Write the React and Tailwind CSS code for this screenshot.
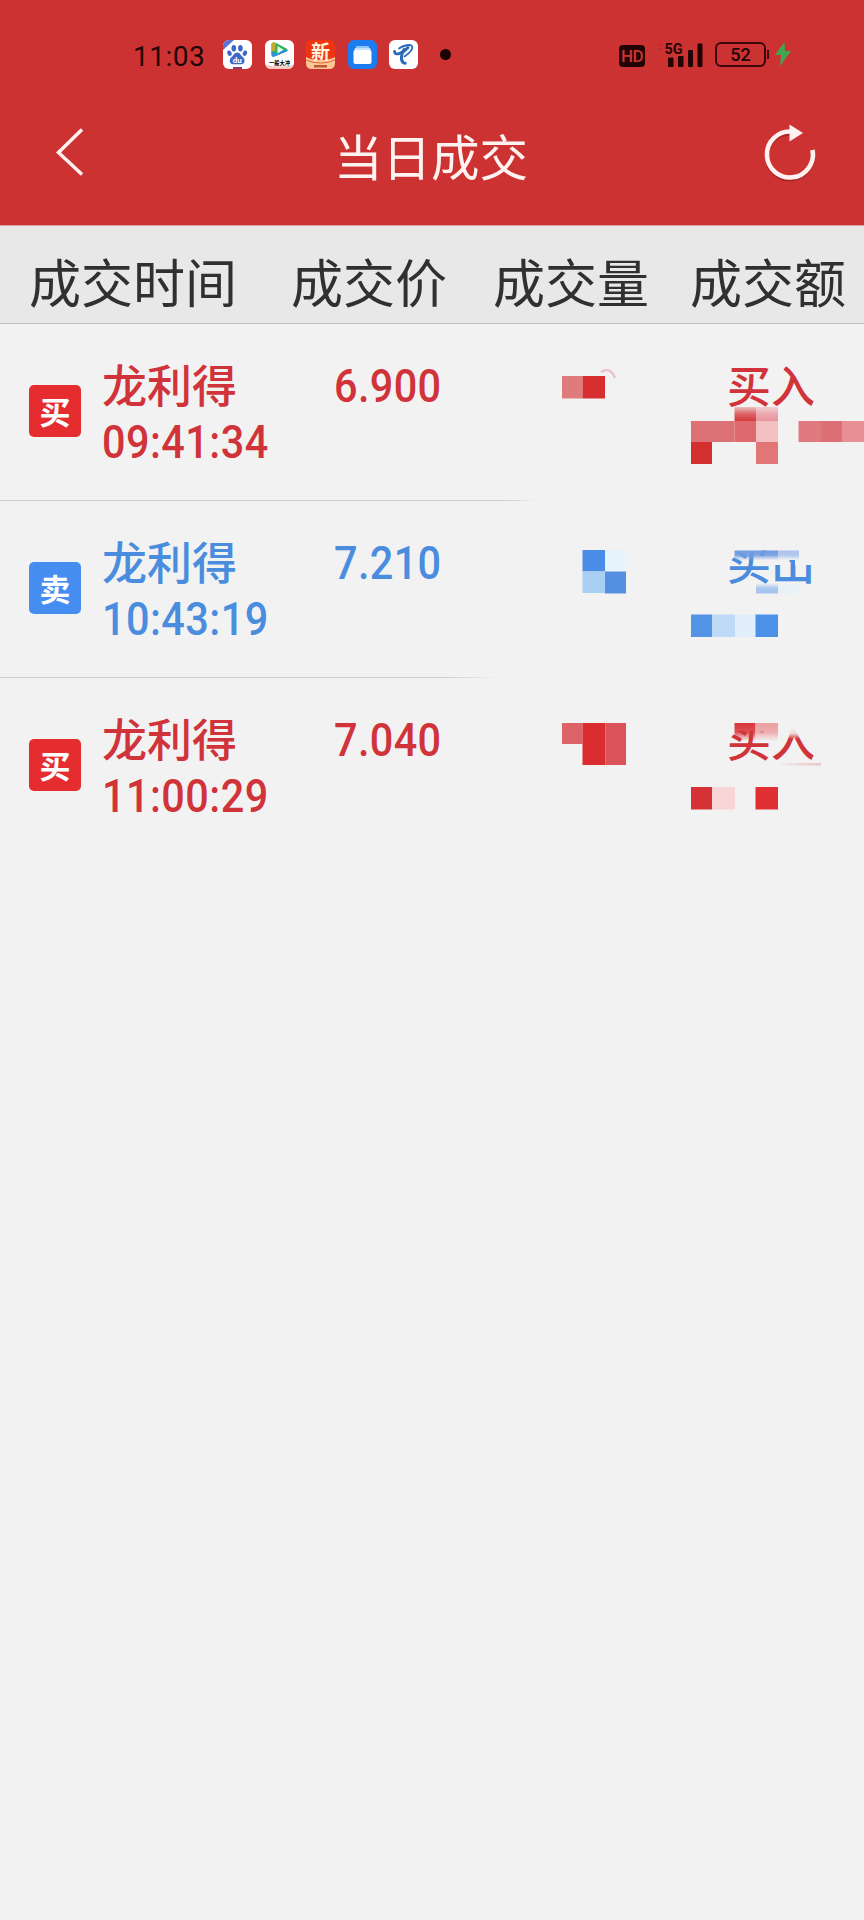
import React from 'react';

const trades = [
  { type: 'buy', badge: '买', name: '龙利得', time: '09:41:34', price: '6.900', side: '买入' },
  { type: 'sell', badge: '卖', name: '龙利得', time: '10:43:19', price: '7.210', side: '买出' },
  { type: 'buy', badge: '买', name: '龙利得', time: '11:00:29', price: '7.040', side: '买入' },
];

// [x, y, width, height, fill] of each mosaic block, per row
const mosaics = [
  [
    [62, 52, 20.5, 22.5, '#df7b7d'],
    [82.5, 52, 22.5, 22.5, '#d72e30'],
    [234.5, 83, 21.5, 14, 'url(#redDown)'],
    [256, 83, 22, 14, 'url(#pinkDown)'],
    [191, 97, 43.5, 21, '#dd7276'],
    [234.5, 97, 21.5, 21, '#df6a6e'],
    [256, 97, 22, 21, '#f4bfc1'],
    [298.5, 97, 22.5, 21, '#df7a80'],
    [321, 97, 21, 21, '#dc7074'],
    [342, 97, 22, 21, '#e88f96'],
    [191, 118, 21, 22, '#d3302f'],
    [256, 118, 22, 22, '#e27677'],
  ],
  [
    [226, 38, 52, 11.5, '#f2f2f2'],
    [275, 38, 47, 21, '#f2f2f2'],
    [275, 58, 14.5, 6, '#f2f2f2'],
    [295, 58, 27, 6, '#f2f2f2'],
    [82.5, 49, 22.5, 21.5, '#4b8de6'],
    [105, 49, 20, 21, '#e6f3fd'],
    [82.5, 70.5, 22.5, 21.5, '#a9cff3'],
    [105, 70.5, 21, 22, '#5590e0'],
    [234.5, 49.5, 43.5, 10, 'url(#blueUp)'],
    [278, 49.5, 21, 10, 'url(#lightBlueUp)'],
    [256, 82, 22, 10.5, 'url(#blueDown)'],
    [278, 84, 21, 8.5, '#e8f1f6'],
    [191, 113.5, 21, 22.5, '#5494e6'],
    [212, 113.5, 23, 22.5, '#bfdaf6'],
    [235, 113.5, 20.5, 22.5, '#e2eefc'],
    [255.5, 113.5, 22.5, 22.5, '#4b91e8'],
  ],
  [
    [226, 38, 52, 15, '#f2f2f2'],
    [273, 38, 49, 12, '#f2f2f2'],
    [278, 50, 44, 11, 'url(#coverFade)'],
    [62, 45, 20.5, 21, '#dc6468'],
    [82.5, 45, 23, 42, '#db2c2f'],
    [105.5, 45, 20.5, 42, '#db5358'],
    [234.5, 45, 21, 18, 'url(#redUp)'],
    [255.5, 45, 22.5, 18, 'url(#pinkUp)'],
    [278, 85, 43, 2.5, 'url(#lineFade)'],
    [191, 109, 21, 22.5, '#d43237'],
    [212, 109, 23, 22.5, '#fad5d7'],
    [255.5, 109, 22.5, 22.5, '#e03033'],
  ],
];

const Fade = ({ id, from, to, horizontal }) => (
  <linearGradient id={id} x1="0" y1="0" x2={horizontal ? 1 : 0} y2={horizontal ? 0 : 1}>
    <stop offset="0" stopColor={from[0]} stopOpacity={from[1]} />
    <stop offset="0.5" stopColor={from[0]} stopOpacity={Math.max(from[1], to[1]) * 0.85} />
    <stop offset="1" stopColor={to[0]} stopOpacity={to[1]} />
  </linearGradient>
);

const Gradients = () => (
  <svg className="absolute h-0 w-0">
    <defs>
      <Fade id="redDown" from={['#d9494d', 0.3]} to={['#d3393e', 1]} />
      <Fade id="pinkDown" from={['#ec9aa2', 0.4]} to={['#ea949c', 1]} />
      <Fade id="redUp" from={['#d8343a', 1]} to={['#d8343a', 0]} />
      <Fade id="pinkUp" from={['#eda0a2', 1]} to={['#eda0a2', 0]} />
      <Fade id="blueUp" from={['#6f9be0', 1]} to={['#8fb2ea', 0]} />
      <Fade id="lightBlueUp" from={['#aac2ee', 1]} to={['#c4d8f4', 0]} />
      <Fade id="blueDown" from={['#9fc0ee', 0]} to={['#a6c4ef', 1]} />
      <Fade id="coverFade" from={['#f2f2f2', 1]} to={['#f2f2f2', 0]} />
      <Fade id="lineFade" from={['#eccaca', 0]} to={['#eab9b9', 0.8]} horizontal />
    </defs>
  </svg>
);

const Mosaic = ({ index }) => (
  <svg className="absolute right-0 top-0" width="364" height="177" viewBox="0 0 364 177">
    {mosaics[index].map(([x, y, w, h, fill], i) => (
      <rect key={i} x={x} y={y} width={w} height={h} fill={fill} />
    ))}
    {index === 0 && (
      <path d="M101 48q9-6 14 6" fill="none" stroke="#ecc3ca" strokeWidth="2.5" />
    )}
  </svg>
);

const StatusBar = () => (
  <div className="flex h-[110px] items-start pl-[133px] pt-[40px] text-[#1f0505]">
    <span className="w-[90px] font-['Roboto'] text-[28px] leading-[33px] tracking-[0.5px]">11:03</span>
    <div className="flex gap-[12.6px]">
      {/* Baidu */}
      <svg width="29" height="29" viewBox="0 0 29 29">
        <rect width="29" height="29" rx="6" fill="#fff" />
        <path d="M6 0h5L0 10V6a6 6 0 0 1 6-6z" fill="#5d6fd0" />
        <g fill="#3d68c8">
          <ellipse cx="10.8" cy="8.2" rx="2.3" ry="3.2" />
          <ellipse cx="17.4" cy="8.2" rx="2.3" ry="3.2" />
          <ellipse cx="6.5" cy="13.2" rx="2.1" ry="2.8" transform="rotate(-20 6.5 13.2)" />
          <ellipse cx="21.9" cy="13.2" rx="2.1" ry="2.8" transform="rotate(20 21.9 13.2)" />
          <path d="M14.2 12.4c3 0 3.6 3 5.6 4.6 2.8 2.2 2.3 7.3-1.6 7.3h-8c-4 0-4.4-5-1.6-7.3 2-1.6 2.6-4.6 5.6-4.6z" />
        </g>
        <text x="14.2" y="22.8" textAnchor="middle" className="fill-white font-['Roboto'] text-[8px] font-bold">du</text>
        <rect x="10" y="27" width="9" height="2" fill="#8c3e68" />
      </svg>
      {/* video player */}
      <svg className="overflow-visible" width="29" height="29" viewBox="0 0 29 29">
        <rect width="29" height="29" rx="6" fill="#fff" />
        <path d="M1 25q13 3 27 0q-1 4-5 4H6q-4 0-5-4z" fill="#f8c8c0" />
        <path d="M9 2.500q-2.500-.5-2.500 2v10q0 3 3 2l12-5q2-1 0-3L11 3z" fill="#2fb455" />
        <path d="M9 2.500q-2.500-.5-2.500 2v7l4-1V3z" fill="#c9a92d" />
        <path d="M6.500 11v3.500q0 3 3 2l12-5q1.500-.7 1-2l-6 1-6 3z" fill="#2b93dc" />
        <path d="M12.500 6l6 3.700-6 3.700z" fill="#e9fff0" />
        <text x="4" y="24.5" textLength="21" lengthAdjust="spacingAndGlyphs" className="fill-black font-['Noto_Sans_CJK_SC'] text-[6px] font-bold">一般大冲</text>
      </svg>
      {/* news */}
      <svg className="overflow-visible" width="29" height="29" viewBox="0 0 29 29">
        <rect width="29" height="29" rx="6" fill="#ee3410" />
        <path d="M0 17q5 3 14.500 3T29 17v6q0 6-6 6H6q-6 0-6-6z" fill="#ffc795" />
        <text x="14.5" y="18.5" textAnchor="middle" className="fill-[#fff4df] font-['Noto_Sans_CJK_SC'] text-[19px] font-bold">新</text>
        <path d="M0 20q6 3 14.500 3T29 20" fill="none" stroke="#e8623a" />
        <rect x="8" y="25" width="13" height="2.5" fill="#bd5a33" />
      </svg>
      {/* files */}
      <svg width="29" height="29" viewBox="0 0 29 29">
        <rect width="29" height="29" rx="6" fill="#1c7df0" />
        <rect x="8" y="6" width="13" height="3" rx="1" fill="#8fc3fb" />
        <rect x="6.5" y="8" width="16" height="3" rx="1" fill="#c4e0fd" />
        <rect x="5.5" y="10" width="18" height="14" rx="2" fill="#fff" />
      </svg>
      {/* telecom */}
      <svg width="29" height="29" viewBox="0 0 29 29">
        <rect width="29" height="29" rx="6" fill="#fff" />
        <g fill="none" stroke="#2869b8" strokeLinecap="round" strokeLinejoin="round">
          <path d="M5.500 11.500C6 16 13 14 19 7.500" strokeWidth="2.8" />
          <path d="M10 8.500C14 5.500 22 3.500 23.200 6.500 24 9.500 20 13.500 15.500 16.500" strokeWidth="1.8" />
          <path d="M15 9.500C12.500 14 11.500 19.500 14 22.500q.8.800 2.200.7" strokeWidth="3" />
        </g>
      </svg>
    </div>
    <span className="ml-[22px] mt-[9px] h-[11px] w-[11px] rounded-full bg-[#1a0303]"></span>

    <div className="ml-auto mr-[72px] flex">
      <span className="mt-[5px] flex h-[22px] w-[26px] items-center justify-center rounded-[4px] bg-[#230404] font-['Roboto'] text-[17px] font-medium leading-none tracking-[-0.5px] text-[#cd3434]">HD</span>
      <svg className="ml-[13px] overflow-visible" width="50" height="29" viewBox="0 0 50 29">
        <path d="M0 5h4M0 9h4" stroke="#b32a2a" strokeWidth="1" />
        <text x="6.5" y="13.5" className="fill-[#230404] font-['Roboto'] text-[15px] font-bold" textLength="18" lengthAdjust="spacingAndGlyphs">5G</text>
        <g fill="#230404">
          <rect x="10" y="17.5" width="5.5" height="9.5" rx="1" />
          <rect x="20" y="16" width="5.5" height="11" rx="1" />
          <rect x="30" y="10" width="5" height="17" rx="1" />
          <rect x="39.5" y="3.5" width="5" height="23.5" rx="1" />
        </g>
      </svg>
      <div className="ml-[7px] mt-[2px] flex h-[25px] w-[51px] items-center justify-center rounded-[6px] border-2 border-[#3a0808] font-['Roboto'] text-[18px] font-medium leading-none">52</div>
      <span className="ml-px mt-[10px] h-[9px] w-[2px] bg-[#3a0808]"></span>
      <svg className="ml-[6px] mt-[2px]" width="17" height="24" viewBox="0 0 17 24">
        <path d="M9.500 0L0 13h6l-1 11L16 9h-6z" fill="#40a552" />
      </svg>
    </div>
  </div>
);

const TitleBar = () => (
  <div className="flex h-[115px] items-start justify-between pl-[54px] pr-[46px] pt-[13px]">
    <svg width="56" height="60" viewBox="0 0 56 60">
      <path d="M28 6.500L4.500 29.500 28 51.500" fill="none" stroke="#fff1ef" strokeWidth="3.5" />
    </svg>
    <h1 className="mr-[8px] text-[48.5px] leading-[64px] text-[#fff3f1]">当日成交</h1>
    <svg width="58" height="60" viewBox="0 0 58 60">
      <path d="M52.500 27A23 23 0 1 1 31 8.500" fill="none" stroke="#a92424" strokeWidth="4" transform="translate(0 2)" />
      <path d="M52.500 27A23 23 0 1 1 31 8.500" fill="none" stroke="#fff1ef" strokeWidth="4.6" />
      <path d="M29.500 1.500L43 10 29.500 18.500z" fill="#fff1ef" />
    </svg>
  </div>
);

const TradeRow = ({ trade, index }) => {
  const buy = trade.type === 'buy';
  return (
    <div className={`relative flex h-[177px] pl-[29px] pt-[32px] ${buy ? 'text-[#d0333a]' : 'text-[#4a8ddf]'}`}>
      <div className={`mt-[29px] flex h-[52px] w-[52px] items-center justify-center rounded-[5px] pb-[2px] text-[31px] font-bold leading-none text-white ${buy ? 'bg-[#e52d30]' : 'bg-[#458df0]'}`}>
        {trade.badge}
      </div>
      <div className="ml-[21px] w-[232px]">
        <p className="text-[45px] font-medium leading-[55px]">{trade.name}</p>
        <p className="mt-[4px] w-fit origin-left scale-x-[0.9] font-['Roboto'] text-[46px] font-medium leading-[55px] tracking-[0.5px]">{trade.time}</p>
      </div>
      <div className="w-[393px] pt-[3px]">
        <p className="w-fit origin-left scale-x-[0.9] font-['Roboto'] text-[46px] font-medium leading-[55px] tracking-[0.4px]">{trade.price}</p>
      </div>
      <p className="pt-px text-[44px] font-medium leading-[55px]">{trade.side}</p>
      <Mosaic index={index} />
      {index === 0 && <div className="absolute bottom-0 left-0 h-px w-[536px] bg-gradient-to-r from-[#cdd0d0] from-95% to-transparent"></div>}
      {index === 1 && <div className="absolute bottom-0 left-0 h-px w-[498px] bg-gradient-to-r from-[#cdd0d0] from-90% to-transparent"></div>}
    </div>
  );
};

const App = () => {
  return (
    <div className="min-h-[1920px] w-[864px] overflow-hidden bg-[#f2f2f2] font-['Noto_Sans_CJK_SC',sans-serif]">
      <Gradients />
      <header className="bg-[#cd3232]">
        <StatusBar />
        <TitleBar />
      </header>

      <div className="flex h-[99px] whitespace-nowrap border-b border-t border-b-[#c2c2c2] border-t-[#dca0a0] bg-[#e8e8e8] pl-[29px] pt-[18px] text-[52px] leading-[74px] text-[#303030]">
        <span className="w-[262px]">成交时间</span>
        <span className="w-[202px]">成交价</span>
        <span className="w-[197px]">成交量</span>
        <span>成交额</span>
      </div>

      <main>
        {trades.map((trade, i) => (
          <TradeRow key={trade.time} trade={trade} index={i} />
        ))}
      </main>
    </div>
  );
};

export default App;
